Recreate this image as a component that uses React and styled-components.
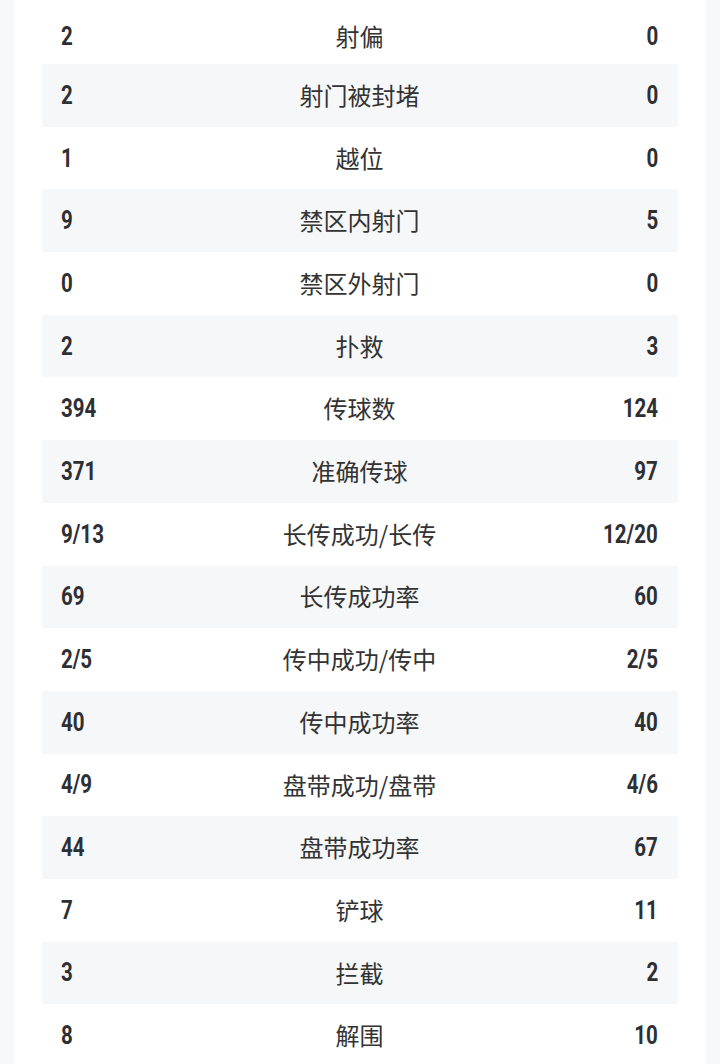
import React from "react";
import styled, { createGlobalStyle } from "styled-components";

const stats = [
  ["2", "射偏", "0"],
  ["2", "射门被封堵", "0"],
  ["1", "越位", "0"],
  ["9", "禁区内射门", "5"],
  ["0", "禁区外射门", "0"],
  ["2", "扑救", "3"],
  ["394", "传球数", "124"],
  ["371", "准确传球", "97"],
  ["9/13", "长传成功/长传", "12/20"],
  ["69", "长传成功率", "60"],
  ["2/5", "传中成功/传中", "2/5"],
  ["40", "传中成功率", "40"],
  ["4/9", "盘带成功/盘带", "4/6"],
  ["44", "盘带成功率", "67"],
  ["7", "铲球", "11"],
  ["3", "拦截", "2"],
  ["8", "解围", "10"],
];

export default function App() {
  return (
    <>
      <GlobalStyle />
      <Page>
        <Card>
          {stats.map(([home, label, away], i) => (
            <Row key={label} $striped={i % 2 === 1}>
              <Value>{home}</Value>
              <Label>{label}</Label>
              <Value $right>{away}</Value>
            </Row>
          ))}
        </Card>
      </Page>
    </>
  );
}

const GlobalStyle = createGlobalStyle`
  html, body {
    margin: 0;
    padding: 0;
    background: #f7f8fa;
  }
`;

const Page = styled.div`
  height: 1064px;
  overflow: hidden;
  padding: 0 14px;
  background: #f7f8fa;
`;

const Card = styled.div`
  background: #ffffff;
  padding: 0 28px;
  min-height: 100%;
`;

const Row = styled.div`
  box-sizing: border-box;
  display: grid;
  grid-template-columns: 1fr auto 1fr;
  align-items: center;
  height: 62.7px;
  padding: 0 20px 0 19px;
  background: ${(p) => (p.$striped ? "#f6f7f9" : "#ffffff")};

  &:first-child {
    height: 64px;
    padding-top: 8px;
  }
`;

const Value = styled.span`
  display: inline-block;
  justify-self: ${(p) => (p.$right ? "end" : "start")};
  transform: scaleX(0.82);
  transform-origin: ${(p) => (p.$right ? "right" : "left")} center;
  font-family: Roboto, "Liberation Sans", sans-serif;
  font-weight: 700;
  font-size: 25px;
  line-height: 1;
  color: #2e2f33;
`;

const Label = styled.span`
  font-family: "Noto Sans CJK SC", "Noto Sans", sans-serif;
  font-size: 24px;
  line-height: 1.2;
  color: #333333;
  text-align: center;
`;
